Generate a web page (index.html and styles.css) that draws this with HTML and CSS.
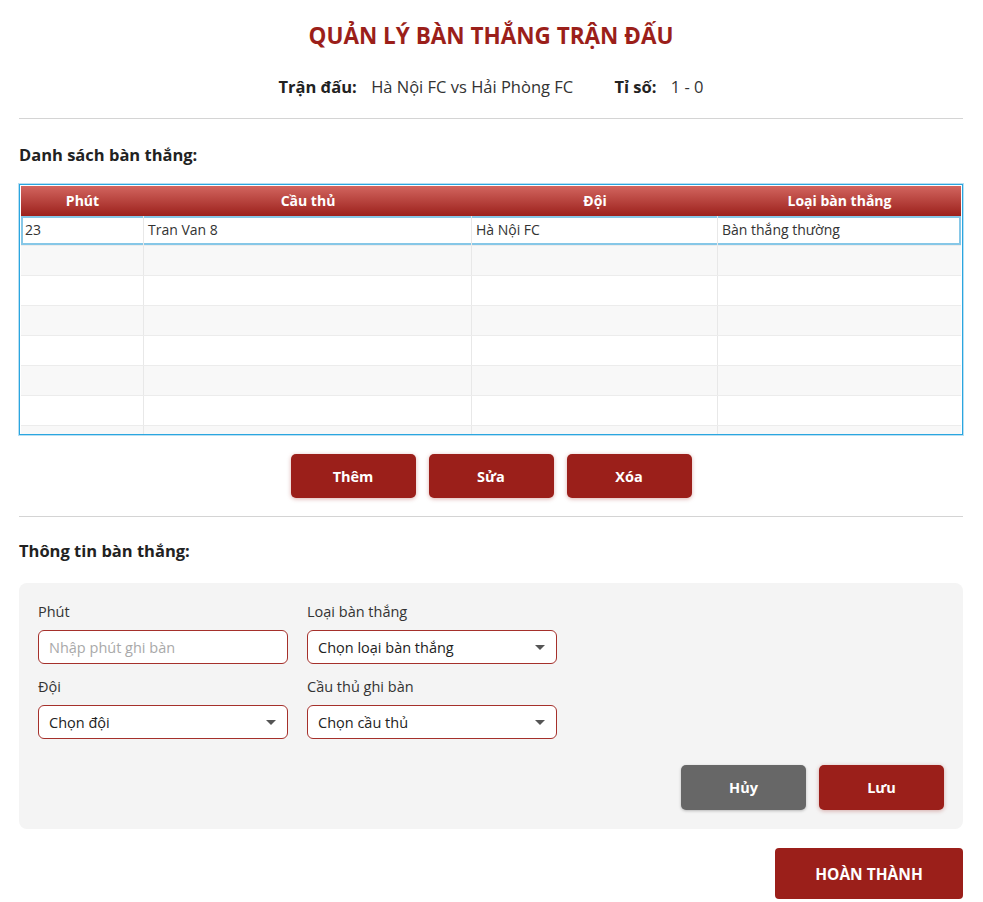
FILE: index.html
```html
<!DOCTYPE html>
<html lang="vi">
<head>
<meta charset="utf-8">
<title>Quản lý bàn thắng trận đấu</title>
<link rel="stylesheet" href="styles.css">
</head>
<body>
<div class="page">
  <h1 class="title">QUẢN LÝ BÀN THẮNG TRẬN ĐẤU</h1>
  <div class="match-info">
    <span class="info-label">Trận đấu:</span>
    <span class="info-value">Hà Nội FC vs Hải Phòng FC</span>
    <span class="info-label score-label">Tỉ số:</span>
    <span class="info-value">1 - 0</span>
  </div>
  <hr class="divider first">
  <h2 class="section-title">Danh sách bàn thắng:</h2>
  <div class="table">
    <div class="row head">
      <div class="cell">Phút</div>
      <div class="cell">Cầu thủ</div>
      <div class="cell">Đội</div>
      <div class="cell">Loại bàn thắng</div>
    </div>
    <div class="row selected">
      <div class="cell">23</div>
      <div class="cell">Tran Van 8</div>
      <div class="cell">Hà Nội FC</div>
      <div class="cell">Bàn thắng thường</div>
    </div>
    <div class="row odd"><div class="cell"></div><div class="cell"></div><div class="cell"></div><div class="cell"></div></div>
    <div class="row"><div class="cell"></div><div class="cell"></div><div class="cell"></div><div class="cell"></div></div>
    <div class="row odd"><div class="cell"></div><div class="cell"></div><div class="cell"></div><div class="cell"></div></div>
    <div class="row"><div class="cell"></div><div class="cell"></div><div class="cell"></div><div class="cell"></div></div>
    <div class="row odd"><div class="cell"></div><div class="cell"></div><div class="cell"></div><div class="cell"></div></div>
    <div class="row"><div class="cell"></div><div class="cell"></div><div class="cell"></div><div class="cell"></div></div>
    <div class="row odd"><div class="cell"></div><div class="cell"></div><div class="cell"></div><div class="cell"></div></div>
  </div>
  <div class="actions">
    <button class="btn btn-red">Thêm</button>
    <button class="btn btn-red">Sửa</button>
    <button class="btn btn-red">Xóa</button>
  </div>
  <hr class="divider second">
  <h2 class="section-title form-title">Thông tin bàn thắng:</h2>
  <div class="panel">
    <div class="form-grid">
      <div class="field">
        <label class="field-label">Phút</label>
        <input class="control" type="text" placeholder="Nhập phút ghi bàn">
      </div>
      <div class="field">
        <label class="field-label">Loại bàn thắng</label>
        <div class="control select"><span>Chọn loại bàn thắng</span><span class="arrow"></span></div>
      </div>
      <div class="field">
        <label class="field-label">Đội</label>
        <div class="control select"><span>Chọn đội</span><span class="arrow"></span></div>
      </div>
      <div class="field">
        <label class="field-label">Cầu thủ ghi bàn</label>
        <div class="control select"><span>Chọn cầu thủ</span><span class="arrow"></span></div>
      </div>
    </div>
    <div class="panel-actions">
      <button class="btn btn-gray">Hủy</button>
      <button class="btn btn-red">Lưu</button>
    </div>
  </div>
  <div class="finish-row">
    <button class="btn btn-red btn-finish">HOÀN THÀNH</button>
  </div>
</div>
</body>
</html>
```
FILE: styles.css
```css
* { box-sizing: border-box; }
html, body { margin: 0; padding: 0; background: #fff; }
body {
  font-family: "Open Sans", "Noto Sans", "DejaVu Sans", sans-serif;
  color: #222;
}
.page {
  width: 944px;
  margin-left: 19px;
  padding-top: 20px;
}
.title {
  margin: 0;
  height: 32px;
  line-height: 32px;
  font-size: 22.5px;
  font-weight: 700;
  color: #9b1f1a;
  text-align: center;
}
.match-info {
  margin-top: 23px;
  height: 24px;
  line-height: 24px;
  text-align: center;
  font-size: 16.5px;
}
.info-label { font-weight: 700; color: #222; margin-right: 10px; }
.info-value { color: #333; }
.score-label { margin-left: 37px; }
.divider {
  margin: 0;
  border: 0;
  border-top: 1px solid #d4d4d4;
}
.divider.first { margin-top: 19px; }
.section-title {
  margin: 25px 0 0;
  height: 22px;
  line-height: 22px;
  font-size: 16.5px;
  font-weight: 700;
  color: #222;
}
.table {
  margin-top: 18px;
  height: 251px;
  border: 1px solid #2aa6e0;
  box-shadow: 0 0 0 1px #b9dff2;
  overflow: hidden;
  padding: 1px 1px 0 1px;
}
.row {
  display: grid;
  grid-template-columns: 123px 328px 246px 1fr;
  height: 30px;
  background: #fff;
  border-bottom: 1px solid #ececec;
}
.row.odd { background: #f8f8f8; }
.cell {
  border-right: 1px solid #e8e8e8;
  padding: 0 4px;
  line-height: 29px;
  font-size: 14px;
  color: #333;
  white-space: nowrap;
}
.cell:last-child { border-right: 0; }
.row.head {
  background: linear-gradient(#d2655f, #9c211c);
  border-bottom: 0;
}
.row.head .cell {
  border-right: 0;
  text-align: center;
  color: #fff;
  font-weight: 700;
  line-height: 30px;
}
.row.selected {
  box-shadow: inset 0 0 0 2px #86c7e7;
  background: #fff;
}
.row.selected .cell { line-height: 28px; }
.actions {
  margin-top: 19px;
  display: flex;
  justify-content: center;
  gap: 13px;
}
.btn {
  font-family: inherit;
  border: 0;
  border-radius: 5px;
  width: 125px;
  height: 44px;
  font-size: 14.5px;
  font-weight: 700;
  color: #fff;
  cursor: pointer;
}
.btn-red {
  background: #9b1f1a;
  box-shadow: 0 1px 4px rgba(155, 31, 26, 0.35);
}
.btn-gray {
  background: #676767;
  box-shadow: 0 1px 3px rgba(0, 0, 0, 0.25);
}
.divider.second { margin-top: 18px; }
.form-title { margin-top: 23px; }
.panel {
  margin-top: 21px;
  background: #f4f4f4;
  border-radius: 8px;
  padding: 19px 19px 19px 19px;
}
.form-grid {
  display: grid;
  grid-template-columns: 250px 250px;
  column-gap: 19px;
  row-gap: 13px;
}
.field { display: flex; flex-direction: column; gap: 8px; }
.field-label {
  height: 20px;
  line-height: 20px;
  font-size: 14.5px;
  color: #333;
}
.control {
  height: 34px;
  width: 250px;
  border: 1.5px solid #a5302b;
  border-radius: 6px;
  background: #fff;
  font-family: inherit;
  font-size: 14.5px;
  color: #222;
  padding: 0 10px;
  outline: none;
}
.control::placeholder { color: #a9a9a9; }
.select {
  display: flex;
  align-items: center;
  justify-content: space-between;
}
.arrow {
  width: 0;
  height: 0;
  border-left: 5px solid transparent;
  border-right: 5px solid transparent;
  border-top: 5px solid #555;
  margin-right: 1px;
}
.panel-actions {
  margin-top: 26px;
  display: flex;
  justify-content: flex-end;
  gap: 13px;
}
.panel-actions .btn { height: 45px; }
.finish-row {
  margin-top: 19px;
  display: flex;
  justify-content: flex-end;
}
.btn-finish {
  width: 188px;
  height: 51px;
  border-radius: 4px;
  font-size: 15.5px;
  box-shadow: none;
}
```
